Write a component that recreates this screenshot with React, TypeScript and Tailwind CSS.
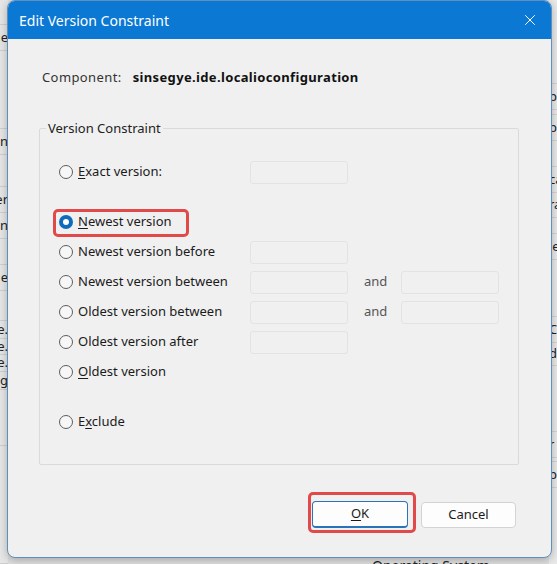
import { X } from "lucide-react";

const font = { fontFamily: '"Noto Sans", "Open Sans", Arial, sans-serif' };

type Option = {
  key: string;
  pre: string;
  u: string;
  post: string;
  inputs: number;
  gapBefore?: boolean;
};

const options: Option[] = [
  { key: "exact", pre: "", u: "E", post: "xact version:", inputs: 1 },
  { key: "newest", pre: "", u: "N", post: "ewest version", inputs: 0, gapBefore: true },
  { key: "newestBefore", pre: "Newest version before", u: "", post: "", inputs: 1 },
  { key: "newestBetween", pre: "Newest version between", u: "", post: "", inputs: 2 },
  { key: "oldestBetween", pre: "Oldest version between", u: "", post: "", inputs: 2 },
  { key: "oldestAfter", pre: "Oldest version after", u: "", post: "", inputs: 1 },
  { key: "oldest", pre: "", u: "O", post: "ldest version", inputs: 0 },
  { key: "exclude", pre: "E", u: "x", post: "clude", inputs: 0, gapBefore: true },
];

// bits of the window lying behind the dialog
const leftBits = [
  { t: "", h: 25 },
  { t: "le", h: 26 },
  { t: "", h: 78 },
  { t: "n", h: 26 },
  { t: "", h: 32 },
  { t: "er", h: 26 },
  { t: "n", h: 26 },
  { t: "", h: 26 },
  { t: "e", h: 26 },
  { t: "", h: 30 },
  { t: "e.", h: 18 },
  { t: "e.", h: 16 },
  { t: "e.", h: 17 },
  { t: "g", h: 18 },
  { t: "", h: 56 },
  { t: "", h: 118 },
];

const rightBits = [
  { t: "", h: 84 },
  { t: "p", h: 26 },
  { t: "", h: 5 },
  { t: "p", h: 26 },
  { t: "", h: 26 },
  { t: "ca", h: 26 },
  { t: "ra", h: 25 },
  { t: "", h: 16 },
  { t: "le", h: 26 },
  { t: "", h: 57 },
  { t: "C", h: 26 },
  { t: "d", h: 23 },
  { t: "", h: 66 },
  { t: "r", h: 26 },
  { t: "", h: 4 },
  { t: "p", h: 26 },
];

function Radio({ checked }: { checked?: boolean }) {
  return checked ? (
    <span className="w-[14px] h-[14px] rounded-full bg-[#0f6cbd] flex items-center justify-center shrink-0">
      <span className="w-[6px] h-[6px] rounded-full bg-white" />
    </span>
  ) : (
    <span className="w-[14px] h-[14px] rounded-full border border-[#5c5c5c] bg-[#f7f7f7] shrink-0" />
  );
}

function Field() {
  return <div className="w-[98px] h-[23px] rounded-[3px] border border-[#e3e3e3] bg-[#f0f0f0]" />;
}

export default function App() {
  return (
    <div className="relative w-[557px] h-[564px] overflow-hidden bg-[#dedede] text-[13px] text-[#1b1b1b]" style={font}>
      <div className="flex w-full h-full">
        <div className="w-[8px] flex flex-col bg-[#e6e6e6] overflow-hidden">
          {leftBits.map((b, i) => (
            <div
              key={i}
              className="flex items-center justify-end border-b border-[#cfcfcf] whitespace-nowrap text-[13px] text-[#222]"
              style={{ height: b.h }}
            >
              {b.t}
            </div>
          ))}
        </div>
        <div className="flex-1" />
        <div className="w-[8px] flex flex-col bg-[#e9e9e9] overflow-hidden">
          {rightBits.map((b, i) => (
            <div
              key={i}
              className="flex items-center border-b border-[#d3d3d3] whitespace-nowrap text-[13px] text-[#222]"
              style={{ height: b.h }}
            >
              {b.t}
            </div>
          ))}
        </div>
      </div>
      <div className="absolute left-[372px] top-[555px] text-[14px] text-[#222] whitespace-nowrap">Operating System...</div>

      {/* dialog */}
      <div className="absolute left-[7px] top-0 w-[545px] h-[558px] rounded-[8px] border border-[#5f8fbf] bg-[#f0f0f0] overflow-hidden flex flex-col shadow-[0_2px_8px_rgba(0,0,0,0.25)]">
        <div className="h-[38px] bg-[#0b78d4] flex items-center justify-between pl-[11px] pr-[8px] text-white">
          <span className="text-[14px]">Edit Version Constraint</span>
          <X size={18} strokeWidth={1.3} className="text-white mr-[4px]" />
        </div>

        <div className="flex-1 flex flex-col px-[31px]">
          <div className="mt-[28px] h-[22px] flex items-center gap-[11px] pl-[3px]">
            <span className="text-[#333] tracking-[0.4px]">Component:</span>
            <span className="font-bold text-[#111] tracking-[0.35px]">sinsegye.ide.localioconfiguration</span>
          </div>

          <div className="relative mt-[39px] w-[480px] border border-[#dadada] rounded-[2px] pt-[28px] pb-[27px] pl-[19px]">
            <span className="absolute left-[6px] top-[-10px] px-[2px] bg-[#f0f0f0] text-[#222] leading-[18px]">
              Version Constraint
            </span>
            {options.map((o) => (
              <div key={o.key} className={o.gapBefore ? "mt-[20px]" : ""}>
                <div className="relative h-[30px] flex items-center">
                  <div className="w-[191px] flex items-center gap-[5px]">
                    <Radio checked={o.key === "newest"} />
                    <span className="whitespace-nowrap">
                      {o.pre}
                      {o.u && <span className="underline underline-offset-2">{o.u}</span>}
                      {o.post}
                    </span>
                  </div>
                  {o.inputs >= 1 && <Field />}
                  {o.inputs === 2 && (
                    <>
                      <span className="ml-[16px] w-[37px] text-[#555]">and</span>
                      <Field />
                    </>
                  )}
                  {o.key === "newest" && (
                    <div className="absolute left-[-6px] top-[2px] w-[136px] h-[28px] rounded-[5px] border-[3px] border-[#e04a4a]" />
                  )}
                </div>
              </div>
            ))}
          </div>

          <div className="mt-[36px] flex justify-end gap-[13px] pr-[4px]">
            <div className="relative">
              <button className="w-[96px] h-[27px] rounded-[4px] bg-[#fdfdfd] border border-[#2a73b8] border-b-2 text-[#1b1b1b]">
                <span className="underline underline-offset-2">O</span>K
              </button>
              <div className="absolute left-[-4px] top-[-9px] w-[108px] h-[41px] rounded-[5px] border-[3px] border-[#e04a4a]" />
            </div>
            <button className="w-[95px] h-[26px] mt-[1px] rounded-[4px] bg-[#fdfdfd] border border-[#d3d3d3] text-[#1b1b1b]">
              Cancel
            </button>
          </div>
        </div>
      </div>
    </div>
  );
}
